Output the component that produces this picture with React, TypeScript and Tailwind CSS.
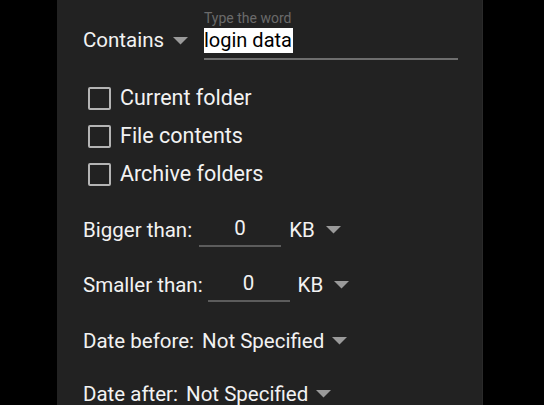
import { useState } from "react";

function Caret({ className = "" }: { className?: string }) {
  return (
    <svg width="15" height="8" viewBox="0 0 15 8" className={className}>
      <path d="M0 0 H15 L7.5 7.5 Z" fill="#9a9a9a" />
    </svg>
  );
}

function Checkbox({ label }: { label: string }) {
  const [checked, setChecked] = useState(false);
  return (
    <button
      onClick={() => setChecked(!checked)}
      className="flex h-[38px] items-center text-left"
    >
      <span className="ml-[5px] flex h-[23px] w-[23px] items-center justify-center rounded-[2px] border-[2.5px] border-[#b4b4b4]">
        {checked && <span className="h-[11px] w-[11px] bg-[#b4b4b4]" />}
      </span>
      <span className="ml-[9px] text-[21.5px] leading-[24px] text-[#f2f2f2]">
        {label}
      </span>
    </button>
  );
}

function SizeRow({ label, gap }: { label: string; gap: string }) {
  return (
    <div className="flex h-[44px] items-center">
      <span>{label}</span>
      <div
        className={`${gap} flex h-[34px] w-[82px] items-center justify-center border-b-[2px] border-[#5c5c5c] pb-[2px]`}
      >
        0
      </div>
      <span className="ml-[8px]">KB</span>
      <Caret className="ml-[11px]" />
    </div>
  );
}

export default function App() {
  return (
    <div
      className="flex h-[405px] w-full overflow-hidden bg-black"
      style={{ fontFamily: "Roboto, 'Noto Sans', sans-serif" }}
    >
      <div className="ml-[57px] h-full w-[426px] border-r border-[#2a2a2a] bg-[#222222] pl-[26px] pt-[11px] text-[20.5px] leading-[24px] text-[#f2f2f2]">
        <div className="flex items-start">
          <div className="mt-[17px] flex h-[25px] w-[121px] items-center">
            <span className="leading-[25px]">Contains</span>
            <Caret className="ml-[9px]" />
          </div>
          <div className="w-[254px]">
            <div className="h-[17px] text-[14px] leading-[15px] text-[#6a6a6a]">
              Type the word
            </div>
            <div className="h-[25px] w-fit bg-white pr-[1px] text-[20px] leading-[25px] text-black">
              login data
            </div>
            <div className="mt-[5px] h-[2px] bg-[#6e6e6e]" />
          </div>
        </div>

        <div className="mt-[19px] flex flex-col">
          <Checkbox label="Current folder" />
          <Checkbox label="File contents" />
          <Checkbox label="Archive folders" />
        </div>

        <div className="mt-[15px]">
          <SizeRow label="Bigger than:" gap="ml-[7px]" />
        </div>
        <div className="mt-[11px]">
          <SizeRow label="Smaller than:" gap="ml-[5px]" />
        </div>

        <div className="mt-[12px] flex h-[44px] items-center">
          <span>Date before:</span>
          <span className="ml-[8px]">Not Specified</span>
          <Caret className="ml-[8px]" />
        </div>
        <div className="mt-[12px] flex h-[38px] items-center leading-[20px]">
          <span>Date after:</span>
          <span className="ml-[8px]">Not Specified</span>
          <Caret className="ml-[8px]" />
        </div>
      </div>
    </div>
  );
}
